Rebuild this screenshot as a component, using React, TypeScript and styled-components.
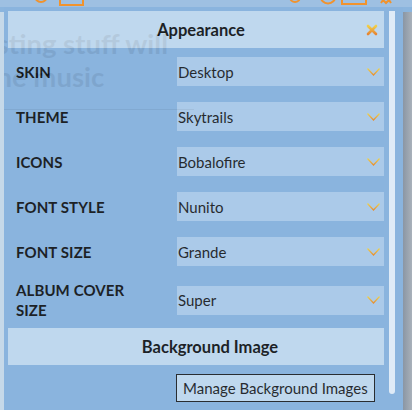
import React, { FC } from 'react';
import styled, { createGlobalStyle } from 'styled-components';

const GlobalStyle = createGlobalStyle`
	html, body {
		margin: 0;
		padding: 0;
		height: 100%;
		overflow: hidden;
	}
	body {
		background: #8bb5de;
		font-family: Lato, "Liberation Sans", sans-serif;
		color: #111;
	}
	#root {
		height: 100%;
	}
`;

const Page = styled.div`
	height: 100%;
	display: flex;
	flex-direction: column;
`;

const TopBar = styled.div`
	height: 7px;
	flex: 0 0 7px;
	background: #9ec0e2;
	display: flex;
	align-items: flex-end;
	overflow: hidden;
`;

const TopIcon = styled.svg<{ $left: number }>`
	flex: 0 0 auto;
	margin-left: ${(p) => p.$left}px;
`;

const Body = styled.div`
	flex: 1;
	display: flex;
	padding-top: 5px;
`;

const Strip = styled.div`
	width: 4px;
	background: #c6d9e9;
`;

const Main = styled.div`
	flex: 1;
	overflow: hidden;
`;

const Hero = styled.div`
	margin-left: -80px;
	width: 270px;
	padding-top: 15px;
	padding-bottom: 16px;
	border-bottom: 1px solid #3a4a60;
	font-size: 27.5px;
	font-weight: 700;
	line-height: 33px;
	color: #1d2635;
	white-space: nowrap;
`;

const Edge = styled.div`
	width: 9px;
	background: linear-gradient(90deg, #8a96a4, #a9b1ba);
`;

const Modal = styled.div`
	position: fixed;
	top: 7px;
	left: 4px;
	right: 9px;
	bottom: 0;
	display: flex;
	background: #8ab4de;
	opacity: 0.9;
`;

const Content = styled.div`
	flex: 1;
	padding: 4px;
	display: flex;
	flex-direction: column;
	overflow: hidden;
`;

const Track = styled.div`
	flex: 0 0 15px;
	padding: 4px 0 0 1px;
	box-sizing: border-box;
`;

const Thumb = styled.div`
	width: 6px;
	height: 383px;
	background: #e8f1fa;
	border-radius: 0 0 3px 3px;
`;

const SectionHeader = styled.div<{ $gap?: number; $shift?: number }>`
	flex: 0 0 37px;
	margin-top: ${(p) => p.$gap ?? 0}px;
	padding-left: ${(p) => p.$shift ?? 0}px;
	display: grid;
	grid-template-columns: 1fr auto 1fr;
	align-items: center;
	background: #c5dcf0;
	font-size: 16.5px;
	font-weight: 700;
`;

const Close = styled.button`
	justify-self: end;
	margin-right: 5px;
	width: 14px;
	height: 14px;
	padding: 0;
	border: 0;
	background: none;
	display: flex;
	align-items: center;
	justify-content: center;
	cursor: pointer;
`;

const Row = styled.div<{ $tall?: boolean; $gap?: number }>`
	flex: 0 0 auto;
	height: ${(p) => (p.$tall ? 52 : 45)}px;
	margin-top: ${(p) => p.$gap ?? 0}px;
	padding-left: 8px;
	display: grid;
	grid-template-columns: 161px 1fr;
	align-items: center;
`;

const Label = styled.div`
	max-width: 128px;
	font-size: 15px;
	font-weight: 700;
	line-height: 20px;
	text-transform: uppercase;
	letter-spacing: 0.1px;
`;

const Select = styled.div`
	height: 29px;
	display: flex;
	align-items: center;
	justify-content: space-between;
	padding: 0 4px 0 1px;
	background: #afcdea;
	font-size: 15px;
	color: #1a1a1a;
`;

const ButtonRow = styled.div`
	margin-top: 9px;
	padding-left: 168px;
	display: flex;
`;

const Button = styled.button`
	height: 28px;
	padding: 0 6px;
	border: 1px solid #1e1e1e;
	background: #c5dcf0;
	font-family: inherit;
	font-size: 15px;
	color: #1a1a1a;
`;

const Chevron: FC = () => (
	<svg width="13" height="8" viewBox="0 0 13 8">
		<defs>
			<linearGradient id="chev" x1="0" y1="0" x2="0" y2="1">
				<stop offset="0" stopColor="#f8d640" />
				<stop offset="1" stopColor="#ef8a22" />
			</linearGradient>
		</defs>
		<polyline points="0.5,0.5 6.5,7 12.5,0.5" fill="none" stroke="url(#chev)" strokeWidth="1.3" />
	</svg>
);

const CloseIcon: FC = () => (
	<svg width="12" height="12" viewBox="0 0 12 12">
		<defs>
			<linearGradient id="xg" x1="0" y1="0" x2="0" y2="1">
				<stop offset="0" stopColor="#fbd23a" />
				<stop offset="1" stopColor="#f08020" />
			</linearGradient>
		</defs>
		<path d="M2 2 L10 10 M10 2 L2 10" stroke="url(#xg)" strokeWidth="2.6" strokeLinecap="round" />
	</svg>
);

const settings = [
	{ label: 'Skin', value: 'Desktop' },
	{ label: 'Theme', value: 'Skytrails' },
	{ label: 'Icons', value: 'Bobalofire' },
	{ label: 'Font Style', value: 'Nunito' },
	{ label: 'Font Size', value: 'Grande' },
	{ label: 'Album Cover Size', value: 'Super', tall: true },
];

const orange = '#f0932e';

const App: FC = () => (
	<>
		<GlobalStyle />
		<Page>
			<TopBar>
				<TopIcon $left={34} width="14" height="20" viewBox="0 0 14 20">
					<circle cx="7" cy="9" r="6" fill="none" stroke={orange} strokeWidth="2" />
				</TopIcon>
				<TopIcon $left={11} width="25" height="20" viewBox="0 0 25 20">
					<rect x="1" y="1" width="23" height="17" fill="none" stroke={orange} strokeWidth="2" />
				</TopIcon>
				<TopIcon $left={205} width="12" height="20" viewBox="0 0 12 20">
					<circle cx="6" cy="10" r="5" fill="none" stroke={orange} strokeWidth="2" />
				</TopIcon>
				<TopIcon $left={18} width="18" height="20" viewBox="0 0 18 20">
					<circle cx="9" cy="9" r="7.5" fill="none" stroke={orange} strokeWidth="2" />
				</TopIcon>
				<TopIcon $left={4} width="26" height="20" viewBox="0 0 26 20">
					<rect x="1" y="1" width="24" height="16" fill="none" stroke={orange} strokeWidth="2" />
				</TopIcon>
				<TopIcon $left={12} width="14" height="20" viewBox="0 0 14 20">
					<path d="M2 16 L4 13 L7 16 L10 13 L12 16" fill="none" stroke={orange} strokeWidth="2" />
				</TopIcon>
			</TopBar>
			<Body>
				<Strip />
				<Main>
					<Hero>
						Interesting stuff will
						<br />
						Genuine music
					</Hero>
				</Main>
				<Edge />
			</Body>
		</Page>
		<Modal>
			<Content>
				<SectionHeader $shift={10}>
					<span />
					<span>Appearance</span>
					<Close aria-label="Close">
						<CloseIcon />
					</Close>
				</SectionHeader>
				{settings.map((s, i) => (
					<Row key={s.label} $tall={s.tall} $gap={i === 0 ? 1 : 0}>
						<Label>{s.label}</Label>
						<Select>
							<span>{s.value}</span>
							<Chevron />
						</Select>
					</Row>
				))}
				<SectionHeader $gap={2} $shift={28}>
					<span />
					<span>Background Image</span>
					<span />
				</SectionHeader>
				<ButtonRow>
					<Button>Manage Background Images</Button>
				</ButtonRow>
			</Content>
			<Track>
				<Thumb />
			</Track>
		</Modal>
	</>
);

export default App;
